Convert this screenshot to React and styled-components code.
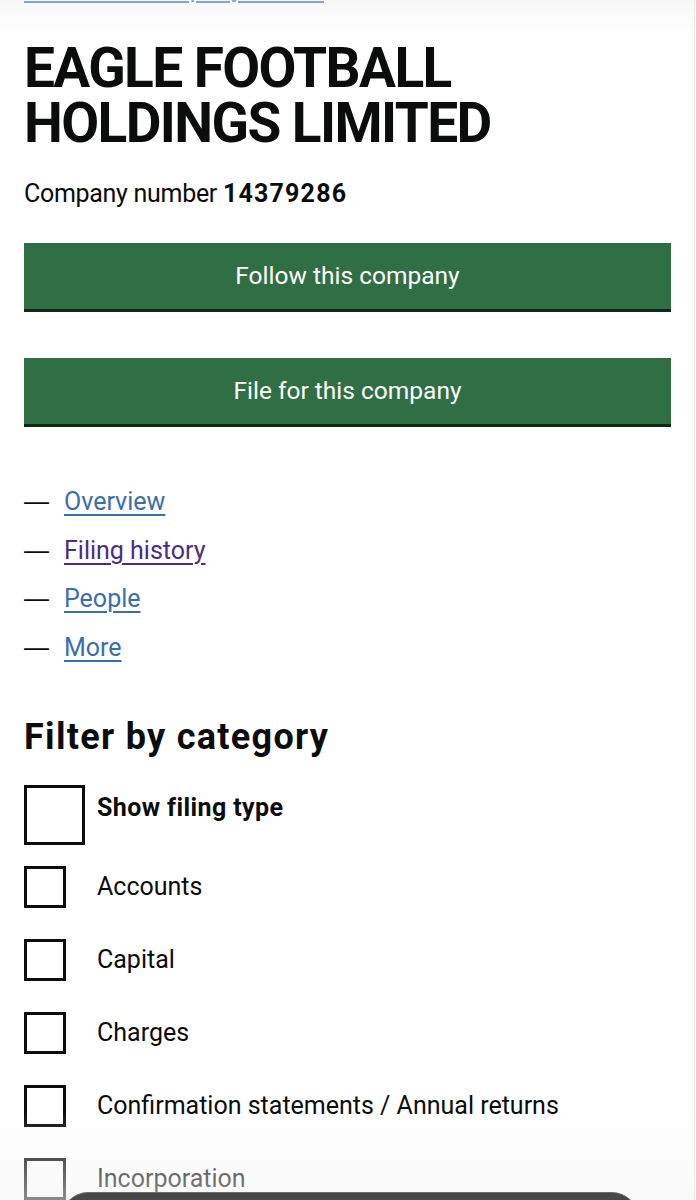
import React from 'react';
import styled, { createGlobalStyle } from 'styled-components';

const GlobalStyle = createGlobalStyle`
  html, body {
    margin: 0;
    padding: 0;
    background: #ffffff;
  }
  body {
    font-family: Roboto, "Liberation Sans", Arial, sans-serif;
    color: #0b0c0c;
    overflow: hidden;
  }
`;

const navLinks = [
  { label: 'Overview' },
  { label: 'Filing history', visited: true },
  { label: 'People' },
  { label: 'More' },
];

const categories = [
  'Accounts',
  'Capital',
  'Charges',
  'Confirmation statements / Annual returns',
  'Incorporation',
];

function App() {
  return (
    <>
      <GlobalStyle />
      <Page>
        <BackRow>
          <BackLink href="#">Advanced company search</BackLink>
        </BackRow>

        <Heading>
          EAGLE FOOTBALL
          <br />
          HOLDINGS LIMITED
        </Heading>
        <CompanyNumber>
          Company number <strong>14379286</strong>
        </CompanyNumber>

        <Button>Follow this company</Button>
        <Button>File for this company</Button>

        <NavList>
          {navLinks.map((item) => (
            <NavItem key={item.label}>
              <Dash>—</Dash>
              <NavLink href="#" $visited={item.visited}>
                {item.label}
              </NavLink>
            </NavItem>
          ))}
        </NavList>

        <SubHeading>Filter by category</SubHeading>
        <CheckList>
          <CheckRow $big>
            <Box $big />
            <CheckLabel $bold>Show filing type</CheckLabel>
          </CheckRow>
          {categories.map((c) => (
            <CheckRow key={c}>
              <Box />
              <CheckLabel>{c}</CheckLabel>
            </CheckRow>
          ))}
        </CheckList>
      </Page>

      <TopFade />
      <BottomFade />
      <EdgeLine />
      <ToolbarPill />
    </>
  );
}

const Page = styled.main`
  padding: 1px 25px 0 24px;
  height: 1200px;
  box-sizing: border-box;
  overflow: hidden;
`;

// page is scrolled, so only the underline of this link peeks in
const BackRow = styled.div`
  margin-top: -27px;
  height: 30px;
`;

const BackLink = styled.a`
  font-size: 25px;
  line-height: 30px;
  color: #3b6fa8;
  text-decoration: underline;
  text-decoration-thickness: 1.5px;
  text-underline-offset: 4px;
`;

const Heading = styled.h1`
  margin: 37px 0 0;
  font-size: 55px;
  line-height: 55px;
  font-weight: 700;
  letter-spacing: -1.6px;
`;

const CompanyNumber = styled.p`
  margin: 28px 0 0;
  font-size: 25px;
  line-height: 30px;
  letter-spacing: -0.3px;

  & strong {
    font-weight: 700;
    letter-spacing: 1.2px;
  }
`;

const Button = styled.button`
  display: block;
  width: 100%;
  height: 66px;
  margin: 34px 0 0;
  padding: 0;
  border: 0;
  border-radius: 0;
  background: #306e44;
  box-shadow: 0 3px 0 #0d2a17;
  color: #ffffff;
  font-family: Roboto, "Liberation Sans", Arial, sans-serif;
  font-size: 24.5px;
  line-height: 30px;
  cursor: pointer;

  & + & {
    margin-top: 49px;
  }
`;

const NavList = styled.ul`
  list-style: none;
  margin: 54px 0 0;
  padding: 0;
`;

const NavItem = styled.li`
  display: flex;
  align-items: baseline;
  height: 48.6px;
  font-size: 25px;
  line-height: 48.6px;
`;

const Dash = styled.span`
  width: 40px;
  font-family: "Liberation Sans", Arial, sans-serif;
  line-height: 30px;
  color: #0b0c0c;
`;

const NavLink = styled.a`
  color: ${(p) => (p.$visited ? '#4c2c85' : '#3b6fa8')};
  text-decoration: underline;
  text-decoration-thickness: 1.5px;
  text-underline-offset: 4px;
`;

const SubHeading = styled.h2`
  margin: 45px 0 0;
  font-size: 36px;
  line-height: 40px;
  font-weight: 700;
  letter-spacing: 1.3px;
`;

const CheckList = styled.div`
  margin-top: 28px;
  display: flex;
  flex-direction: column;
`;

const CheckRow = styled.div`
  display: grid;
  grid-template-columns: 73px 1fr;
  align-items: ${(p) => (p.$big ? 'start' : 'center')};
  margin-bottom: ${(p) => (p.$big ? '21px' : '31px')};
`;

const Box = styled.span`
  display: block;
  box-sizing: border-box;
  width: ${(p) => (p.$big ? '61px' : '42px')};
  height: ${(p) => (p.$big ? '60px' : '42px')};
  border: 3px solid #0b0c0c;
  background: #ffffff;
`;

const CheckLabel = styled.span`
  font-size: 25px;
  font-weight: ${(p) => (p.$bold ? 700 : 400)};
  line-height: 30px;
  padding-top: ${(p) => (p.$bold ? '8px' : '0')};
  letter-spacing: ${(p) => (p.$bold ? '0.4px' : '0')};
`;

const TopFade = styled.div`
  position: fixed;
  left: 0;
  right: 0;
  top: 0;
  height: 36px;
  background: linear-gradient(rgba(238, 238, 238, 0.45), rgba(255, 255, 255, 0));
  pointer-events: none;
`;

const BottomFade = styled.div`
  position: fixed;
  left: 0;
  right: 0;
  bottom: 0;
  height: 90px;
  background: linear-gradient(rgba(250, 250, 250, 0), rgba(244, 244, 244, 0.55));
  pointer-events: none;
`;

const EdgeLine = styled.div`
  position: fixed;
  top: 0;
  bottom: 0;
  right: 1px;
  width: 1px;
  background: #ececec;
  pointer-events: none;
`;

const ToolbarPill = styled.div`
  position: fixed;
  left: 62px;
  right: 58px;
  top: 1192px;
  height: 60px;
  border-radius: 26px;
  background: #474747;
  border-top: 1px solid #6a6a6a;
  pointer-events: none;
`;

export default App;
